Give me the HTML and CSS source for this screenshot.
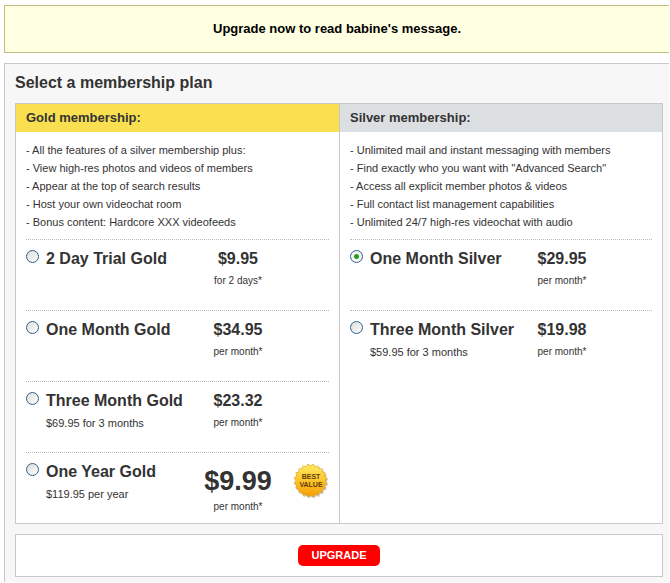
FILE: index.html
```html
<!DOCTYPE html>
<html lang="en">
<head>
    <meta charset="UTF-8">
    <meta name="viewport" content="width=device-width, initial-scale=1.0">
    <title>Upgrade Membership</title>
    <link rel="stylesheet" href="styles.css">
</head>
<body>
    <div class="notice">Upgrade now to read babine's message.</div>

    <form class="panel">
        <h1>Select a membership plan</h1>

        <div class="plans">
            <!-- Gold -->
            <section class="plan gold">
                <h2>Gold membership:</h2>
                <div class="plan-body">
                    <ul class="features">
                        <li>- All the features of a silver membership plus:</li>
                        <li>- View high-res photos and videos of members</li>
                        <li>- Appear at the top of search results</li>
                        <li>- Host your own videochat room</li>
                        <li>- Bonus content: Hardcore XXX videofeeds</li>
                    </ul>
                    <label class="option">
                        <input type="radio" name="plan" value="gold-trial">
                        <span class="name"><b>2 Day Trial Gold</b></span>
                        <span class="price"><b>$9.95</b><small>for 2 days*</small></span>
                    </label>
                    <label class="option">
                        <input type="radio" name="plan" value="gold-1">
                        <span class="name"><b>One Month Gold</b></span>
                        <span class="price"><b>$34.95</b><small>per month*</small></span>
                    </label>
                    <label class="option">
                        <input type="radio" name="plan" value="gold-3">
                        <span class="name"><b>Three Month Gold</b><span class="total">$69.95 for 3 months</span></span>
                        <span class="price"><b>$23.32</b><small>per month*</small></span>
                    </label>
                    <label class="option">
                        <input type="radio" name="plan" value="gold-12">
                        <span class="name"><b>One Year Gold</b><span class="total">$119.95 per year</span></span>
                        <span class="price big"><b>$9.99</b><small>per month*</small></span>
                        <svg class="badge" width="36" height="36" viewBox="0 0 36 36">
                            <defs>
                                <linearGradient id="sun" x1="0" y1="0" x2="0" y2="1">
                                    <stop offset="0" stop-color="#ffee6a"/>
                                    <stop offset="0.5" stop-color="#fdc52c"/>
                                    <stop offset="1" stop-color="#f79a00"/>
                                </linearGradient>
                                <!-- five turned squares make the 20 points -->
                                <g id="star">
                                    <rect x="-12" y="-12" width="24" height="24"/>
                                    <rect x="-12" y="-12" width="24" height="24" transform="rotate(18)"/>
                                    <rect x="-12" y="-12" width="24" height="24" transform="rotate(36)"/>
                                    <rect x="-12" y="-12" width="24" height="24" transform="rotate(54)"/>
                                    <rect x="-12" y="-12" width="24" height="24" transform="rotate(72)"/>
                                </g>
                                <clipPath id="star-clip">
                                    <rect x="6" y="6" width="23" height="23"/>
                                    <rect x="6" y="6" width="23" height="23" transform="rotate(18 17.5 17.5)"/>
                                    <rect x="6" y="6" width="23" height="23" transform="rotate(36 17.5 17.5)"/>
                                    <rect x="6" y="6" width="23" height="23" transform="rotate(54 17.5 17.5)"/>
                                    <rect x="6" y="6" width="23" height="23" transform="rotate(72 17.5 17.5)"/>
                                </clipPath>
                            </defs>
                            <use href="#star" transform="translate(18.5 18.8)" fill="#8a8270" opacity="0.45"/>
                            <use href="#star" transform="translate(17.5 17.5)" fill="#e09a14"/>
                            <rect width="35" height="35" fill="url(#sun)" clip-path="url(#star-clip)"/>
                            <text x="18" y="16" text-anchor="middle">BEST</text>
                            <text x="18" y="24" text-anchor="middle">VALUE</text>
                        </svg>
                    </label>
                </div>
            </section>

            <!-- Silver -->
            <section class="plan silver">
                <h2>Silver membership:</h2>
                <div class="plan-body">
                    <ul class="features">
                        <li>- Unlimited mail and instant messaging with members</li>
                        <li>- Find exactly who you want with "Advanced Search"</li>
                        <li>- Access all explicit member photos &amp; videos</li>
                        <li>- Full contact list management capabilities</li>
                        <li>- Unlimited 24/7 high-res videochat with audio</li>
                    </ul>
                    <label class="option">
                        <input type="radio" name="plan" value="silver-1" checked>
                        <span class="name"><b>One Month Silver</b></span>
                        <span class="price"><b>$29.95</b><small>per month*</small></span>
                    </label>
                    <label class="option">
                        <input type="radio" name="plan" value="silver-3">
                        <span class="name"><b>Three Month Silver</b><span class="total">$59.95 for 3 months</span></span>
                        <span class="price"><b>$19.98</b><small>per month*</small></span>
                    </label>
                </div>
            </section>
        </div>

        <div class="actions">
            <button type="submit">UPGRADE</button>
        </div>
    </form>
</body>
</html>
```
FILE: styles.css
```css
body {
    margin: 5px 1px 0 4px;
    font-family: "Liberation Sans", Arial, sans-serif;
    font-size: 11px;
    color: #333;
    background: #fff;
}
h1, h2, ul {
    margin: 0;
    padding: 0;
}
.notice {
    padding: 14px 0;
    border: 1px solid #c0c080;
    border-right: none;
    background: #ffffe1;
    color: #000;
    font-size: 13px;
    line-height: 18px;
    font-weight: bold;
    text-align: center;
}
.panel {
    margin-top: 10px;
    padding: 9px 6px 5px 10px;
    border: 1px solid #c8c8c8;
    border-right: none;
    border-bottom: none;
    background: #f7f7f7;
}
h1 {
    margin-bottom: 10px;
    font-size: 16px;
    line-height: 20px;
}
.plans {
    display: grid;
    grid-template-columns: 1fr 1fr;
    border: 1px solid #c8c8c8;
    background: #fff;
}
.silver {
    border-left: 1px solid #c8c8c8;
}
h2 {
    padding: 0 10px;
    font-size: 13px;
    line-height: 28px;
    background: #dcdfe2;
}
.gold h2 {
    background: #fae050;
}
.plan-body {
    padding: 9px 10px 0;
}
.features {
    margin-bottom: 8px;
    list-style: none;
    line-height: 18px;
}

/* one row per price option */
.option {
    display: grid;
    grid-template-columns: 20px 152px 80px 1fr;
    align-items: start;
    box-sizing: border-box;
    min-height: 71px;
    padding-top: 8px;
    border-top: 1px dotted #bbb;
}
.option b {
    display: block;
    font-size: 16px;
    line-height: 22px;
}
.option input {
    appearance: none;
    width: 13px;
    height: 13px;
    margin: 2px 0 0;
    border: 1px solid #2f6290;
    border-radius: 50%;
    background: linear-gradient(135deg, #dcdcd7, #fff);
}
.option input:checked {
    background: radial-gradient(circle, #21a121 0 2px, #f4f4f2 3px);
}
.total {
    display: block;
    margin-top: 2px;
    line-height: 18px;
}
.price {
    text-align: center;
}
.price small {
    display: block;
    margin-top: 5px;
    font-size: 10px;
    line-height: 12px;
}
.price.big b {
    font-size: 27px;
    line-height: 40px;
}
.price.big small {
    margin-top: 0;
}
.badge {
    justify-self: end;
    margin-top: 2px;
}
.badge text {
    font-size: 7px;
    font-weight: bold;
    fill: #5f3d0a;
}

.actions {
    margin-top: 10px;
    padding: 10px;
    border: 1px solid #c8c8c8;
    background: #fff;
    text-align: center;
}
.actions button {
    display: block;
    margin: 0 auto;
    padding: 0 13px;
    border: none;
    border-radius: 5px;
    background: #f00;
    color: #fff;
    font-family: inherit;
    font-size: 11px;
    line-height: 21px;
    font-weight: bold;
    cursor: pointer;
}
```
